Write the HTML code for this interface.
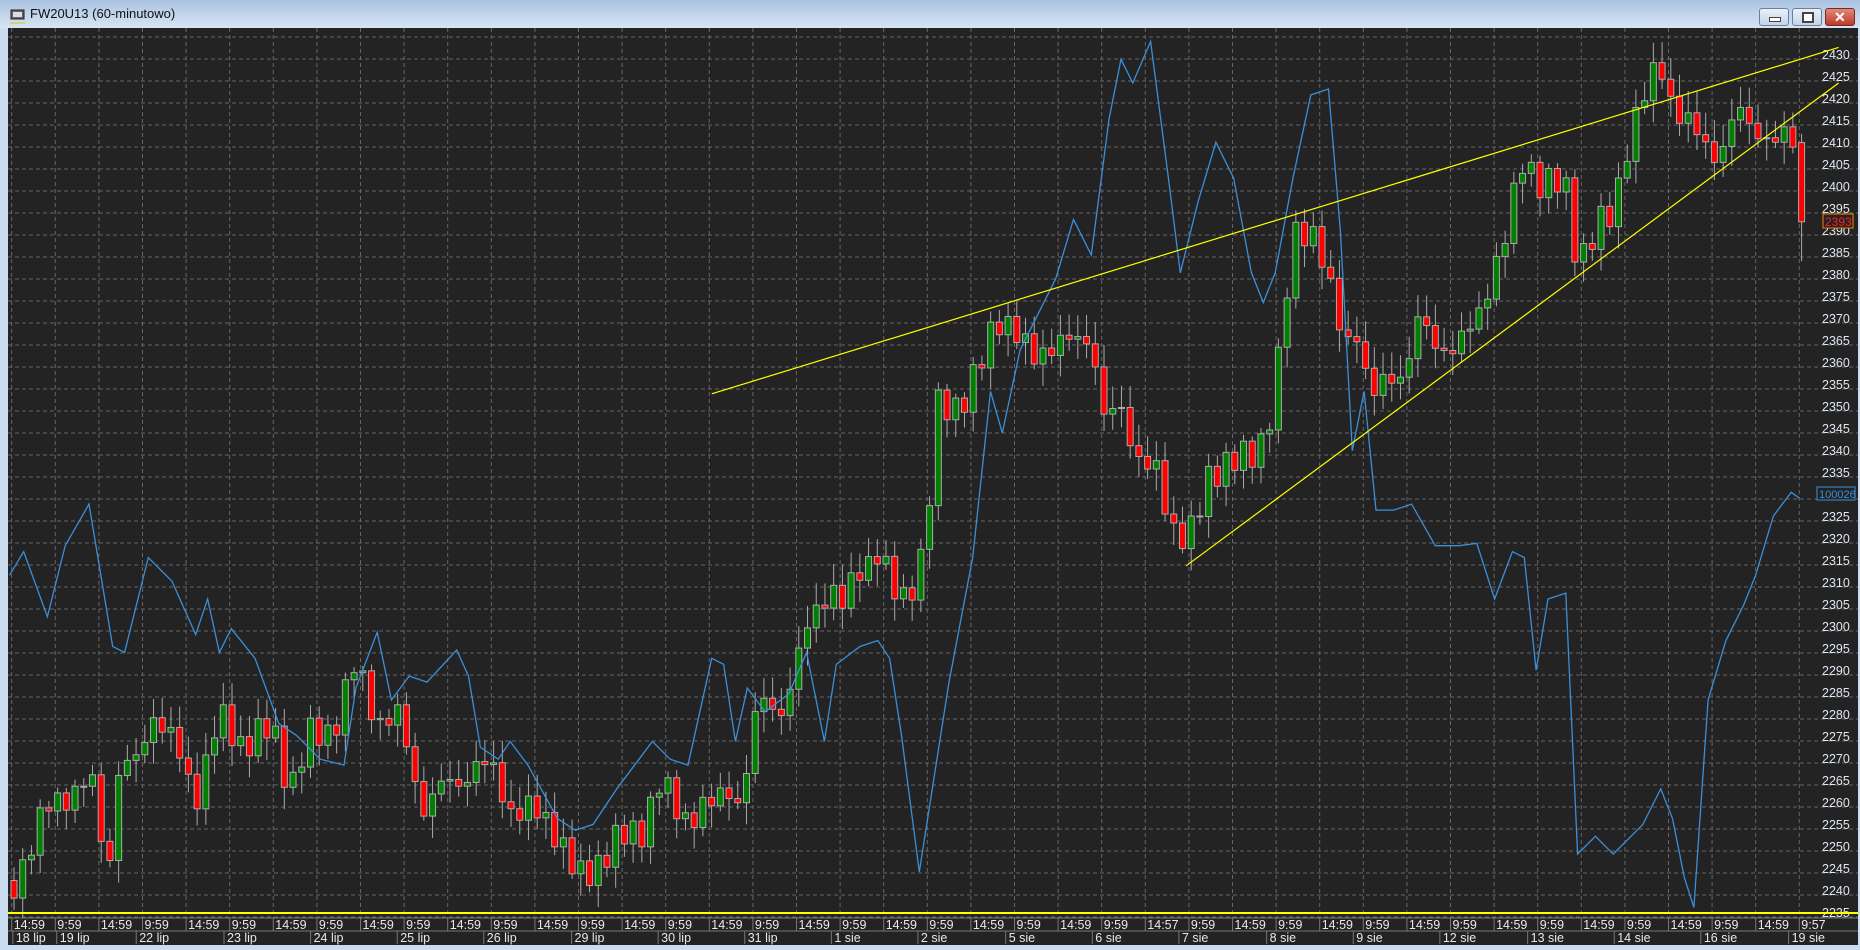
<!DOCTYPE html>
<html><head><meta charset="utf-8">
<style>
html,body{margin:0;padding:0;width:1860px;height:950px;overflow:hidden;background:#c9dcf0;font-family:"Liberation Sans",sans-serif}
#title{position:absolute;left:0;top:0;width:1860px;height:28px;background:linear-gradient(#a9c3e2,#d7e5f4)}
#title span{position:absolute;left:30px;top:6px;font-size:13px;color:#111}
.btn{position:absolute;top:8px;height:16px;border:1px solid #6d7f96;border-radius:3px;background:linear-gradient(#eaf1fa,#c2d4ea)}
#chart{position:absolute;left:8px;top:28px}
</style></head><body>
<div id="title">
<svg style="position:absolute;left:10px;top:8px" width="16" height="16"><rect x="1" y="2" width="13" height="9" fill="#666" stroke="#222"/><rect x="3" y="4" width="9" height="5" fill="#ddd"/><line x1="0" y1="15" x2="15" y2="15" stroke="#cc0"/></svg>
<span>FW20U13 (60-minutowo)</span>
<div class="btn" style="left:1759px;width:28px"><div style="position:absolute;left:9px;top:8px;width:10px;height:3px;background:#fff;border:1px solid #444"></div></div>
<div class="btn" style="left:1792px;width:28px"><div style="position:absolute;left:9px;top:3px;width:8px;height:7px;border:2px solid #444;background:#fff"></div></div>
<div class="btn" style="left:1825px;width:28px;background:linear-gradient(#e08a7a,#c0392b);border-color:#7a2a22"><div style="position:absolute;left:8px;top:0;color:#fff;font-weight:bold;font-size:14px">✕</div></div>
</div>
<svg id="chart" width="1850" height="917" xmlns="http://www.w3.org/2000/svg"></svg>
<script>
const svg=document.getElementById('chart');
const OX=8,OY=28;
let h='<rect x="0" y="0" width="1850" height="917" fill="#232323"/>';
const Y=p=>59+(2430-p)*4.4-OY;
for(let p=2235;p<=2435;p+=5){const y=Y(p);h+=`<line x1="0" y1="${y}" x2="1850" y2="${y}" stroke="#666" stroke-dasharray="4,3"/>`;
 if(p<=2430)h+=`<text x="${1822-OX}" y="${y-0}" font-size="12.5" fill="#dfe7f2" font-family="Liberation Sans">${p}</text>`;}
for(let i=0;i<42;i++){const x=11.7+43.6*i-OX;h+=`<line x1="${x}" y1="0" x2="${x}" y2="890" stroke="#666" stroke-dasharray="4,3"/>`;}
const K=[[15,2245],[45,2262],[80,2265],[88,2248],[95,2250],[100,2268],[115,2270],[130,2282],[145,2275],[165,2262],[170,2268],[185,2280],[200,2275],[230,2277],[245,2265],[260,2275],[280,2278],[300,2292],[310,2285],[320,2280],[335,2280],[345,2272],[355,2260],[375,2265],[385,2265],[400,2270],[415,2268],[430,2260],[455,2258],[470,2255],[480,2247],[490,2243],[510,2250],[540,2255],[555,2265],[575,2258],[600,2260],[615,2265],[625,2260],[635,2278],[645,2285],[660,2282],[670,2290],[685,2305],[700,2310],[710,2305],[725,2315],[740,2318],[750,2310],[760,2307],[780,2318],[790,2350],[800,2352],[810,2352],[825,2358],[835,2368],[845,2373],[855,2367],[870,2362],[880,2365],[900,2365],[920,2368],[930,2348],[945,2350],[960,2340],[975,2335],[985,2325],[1000,2322],[1010,2325],[1020,2335],[1035,2340],[1050,2338],[1060,2340],[1070,2350],[1080,2365],[1090,2388],[1105,2393],[1115,2385],[1125,2372],[1135,2365],[1145,2370],[1155,2352],[1170,2357],[1185,2360],[1195,2370],[1210,2365],[1230,2365],[1245,2370],[1255,2380],[1270,2390],[1285,2408],[1300,2402],[1320,2400],[1330,2385],[1345,2390],[1360,2395],[1370,2410],[1385,2420],[1400,2430],[1410,2420],[1420,2415],[1435,2412],[1450,2408],[1465,2418],[1480,2415],[1495,2410],[1505,2412],[1512,2412],[1517,2393]];
function P(xs){for(let i=1;i<K.length;i++){if(xs<=K[i][0]){const a=K[i-1],b=K[i];return a[1]+(b[1]-a[1])*(xs-a[0])/(b[0]-a[0]);}}return K[K.length-1][1];}
const S=1.1862;
let prev=P(12);
for(let x=14;x<=1803;x+=8.72){
 const xs=x/S;let c=P(xs)+Math.sin(x*0.37)*3+Math.sin(x*1.3)*2;
 let o=prev;
 if(x>1795){o=2411;c=2393;}
 prev=c;
 let hi=Math.max(o,c)+1+Math.abs(Math.sin(x*0.71))*4, lo=Math.min(o,c)-1-Math.abs(Math.cos(x*0.53))*4;
 if(x>1795){hi=2413;lo=2384;}
 const X=x-OX;
 h+=`<line x1="${X}" y1="${Y(hi)}" x2="${X}" y2="${Y(lo)}" stroke="#aaa"/>`;
 const t=Y(Math.max(o,c)),b=Y(Math.min(o,c));
 h+=`<rect x="${X-3}" y="${t}" width="6" height="${Math.max(1,b-t)}" fill="${c>=o?'#008000':'#ff0000'}" stroke="#aaa" stroke-width="1"/>`;
}
const B=[[8,485],[20,465],[40,520],[55,460],[75,425],[95,545],[105,550],[125,470],[145,490],[165,535],[175,505],[185,550],[195,530],[215,555],[235,610],[250,620],[270,640],[290,645],[300,580],[318,533],[330,590],[345,570],[360,575],[385,548],[395,570],[405,630],[420,640],[430,625],[445,645],[470,690],[485,700],[500,695],[520,665],[550,625],[565,640],[580,645],[600,555],[610,560],[620,625],[630,580],[645,600],[665,585],[680,550],[695,625],[705,560],[725,545],[740,540],[750,555],[760,620],[775,735],[800,575],[820,470],[835,330],[845,365],[860,295],[875,265],[890,235],[905,185],[920,215],[935,100],[945,50],[955,70],[970,35],[985,150],[995,230],[1010,170],[1025,120],[1040,150],[1055,230],[1065,255],[1075,230],[1090,150],[1105,80],[1120,75],[1130,195],[1140,380],[1150,330],[1160,430],[1175,430],[1190,425],[1210,460],[1230,460],[1245,458],[1260,505],[1275,465],[1285,470],[1295,565],[1305,505],[1320,500],[1330,720],[1345,705],[1360,720],[1385,695],[1400,665],[1410,690],[1420,740],[1428,765],[1440,590],[1455,540],[1470,510],[1480,485],[1495,435],[1510,415],[1517,420]];
h+=`<polyline fill="none" stroke="#3b8fd9" stroke-width="1.3" points="${B.map(p=>(p[0]*S-OX).toFixed(1)+','+(p[1]*S-OY).toFixed(1)).join(' ')}"/>`;
const L=(a,b,c,d)=>`<line x1="${a*S-OX}" y1="${b*S-OY}" x2="${c*S-OX}" y2="${d*S-OY}" stroke="#ffff00" stroke-width="1.2"/>`;
h+=L(600,332,1550,40)+L(1000,477,1550,70);
h+=`<line x1="0" y1="${913-OY}" x2="1850" y2="${913-OY}" stroke="#ffff00" stroke-width="2"/>`;
h+=`<rect x="${1823-OX}" y="${214-OY}" width="30" height="14" fill="#232323" stroke="#ff7f00"/><text x="${1825-OX}" y="${226-OY}" font-size="12" fill="#ff2020">2393</text>`;
h+=`<rect x="${1817-OX}" y="${487-OY}" width="38" height="13" fill="#232323" stroke="#3b8fd9"/><text x="${1819-OX}" y="${498-OY}" font-size="11" fill="#3b8fd9">100026</text>`;
h+=`<line x1="0" y1="${918-OY}" x2="1850" y2="${918-OY}" stroke="#777"/><line x1="0" y1="${931-OY}" x2="1850" y2="${931-OY}" stroke="#777"/>`;
for(let i=0;i<42;i++){const x=11.7+43.6*i-OX;let t=i%2?'9:59':'14:59';if(i==26)t='14:57';if(i==41)t='9:57';
 h+=`<line x1="${x}" y1="${918-OY}" x2="${x}" y2="${931-OY}" stroke="#777"/><text x="${x+2}" y="${929-OY}" font-size="12.5" fill="#e8e8e8">${t}</text>`;}
const D=[[10,'18 lip'],[47,'19 lip'],[114,'22 lip'],[188,'23 lip'],[261,'24 lip'],[334,'25 lip'],[407,'26 lip'],[481,'29 lip'],[554,'30 lip'],[627,'31 lip'],[700,'1 sie'],[773,'2 sie'],[847,'5 sie'],[920,'6 sie'],[993,'7 sie'],[1067,'8 sie'],[1140,'9 sie'],[1213,'12 sie'],[1287,'13 sie'],[1360,'14 sie'],[1433,'16 sie'],[1507,'19 sie']];
for(const [xs,t] of D){const x=xs*S-OX+1;h+=`<line x1="${x}" y1="${931-OY}" x2="${x}" y2="${944-OY}" stroke="#777"/><text x="${x+3}" y="${942-OY}" font-size="12.5" fill="#e8e8e8">${t}</text>`;}
svg.innerHTML=h;
</script>
</body></html>
